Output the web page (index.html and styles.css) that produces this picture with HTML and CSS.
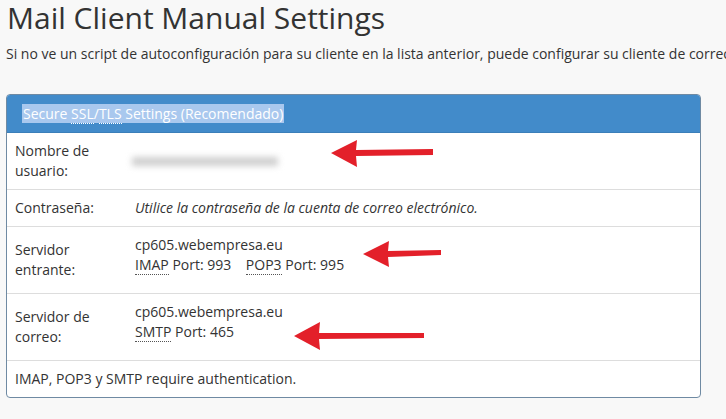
FILE: index.html
```html
<!DOCTYPE html>
<html lang="es">
<head>
    <meta charset="UTF-8">
    <title>Mail Client Manual Settings</title>
    <link rel="stylesheet" href="styles.css">
</head>
<body>
    <div class="page">
        <h1 class="page-title">Mail Client Manual Settings</h1>
        <p class="page-intro">Si no ve un script de autoconfiguración para su cliente en la lista anterior, puede configurar su cliente de correo electrónico manualmente con los siguientes ajustes:</p>

        <div class="panel">
            <div class="panel-heading"><span class="selected">Secure <abbr title="Secure Sockets Layer">SSL</abbr>/<abbr title="Transport Layer Security">TLS</abbr> Settings (Recomendado)</span></div>
            <div class="panel-row">
                <div class="row-label">Nombre de usuario:</div>
                <div class="row-value row-value-center"><span class="blurred"></span></div>
            </div>
            <div class="panel-row">
                <div class="row-label">Contraseña:</div>
                <div class="row-value"><em>Utilice la contraseña de la cuenta de correo electrónico.</em></div>
            </div>
            <div class="panel-row">
                <div class="row-label">Servidor entrante:</div>
                <div class="row-value row-value-server">
                    cp605.webempresa.eu<br>
                    <abbr title="Internet Message Access Protocol">IMAP</abbr> Port: 993 &nbsp;&nbsp;
                    <abbr title="Post Office Protocol 3">POP3</abbr> Port: 995
                </div>
            </div>
            <div class="panel-row">
                <div class="row-label">Servidor de correo:</div>
                <div class="row-value row-value-server">
                    cp605.webempresa.eu<br>
                    <abbr title="Simple Mail Transfer Protocol">SMTP</abbr> Port: 465
                </div>
            </div>
            <div class="panel-footer">IMAP, POP3 y SMTP require authentication.</div>
        </div>

        <!-- red pointers drawn over the screenshot -->
        <svg class="arrow arrow-user" width="110" height="30" viewBox="0 0 110 30">
            <path d="M3 15 L29 2 L28 12 L105 11 L105 17 L28 18 L29 29 Z" fill="#e3202a"/>
        </svg>
        <svg class="arrow arrow-in" width="84" height="30" viewBox="0 0 84 30">
            <path d="M2 15 L28 2 L27 12 L80 11 L80 16 L27 18 L28 28 Z" fill="#e3202a"/>
        </svg>
        <svg class="arrow arrow-out" width="136" height="30" viewBox="0 0 136 30">
            <path d="M2 15 L28 1 L27 12 L132 12 L132 17 L27 18 L28 29 Z" fill="#e3202a"/>
        </svg>
    </div>
</body>
</html>
```

FILE: styles.css
```css
body {
    margin: 0;
    background: #f8f8f8;
    font-family: 'Open Sans', Arial, sans-serif;
    color: #333;
    font-size: 14px;
    line-height: 20px;
    overflow: hidden;
}
.page {
    position: relative;
    padding: 0 25px 0 6px;
}
.page-title {
    margin: 0 0 0 1px;
    font-size: 30px;
    line-height: 36px;
    font-weight: 400;
    color: #333;
}
.page-intro {
    margin: 8px -40px 30px 0;
    white-space: nowrap;
    overflow: hidden;
}
.panel {
    background: #fff;
    border: 1px solid #6f8aa3;
    border-radius: 4px;
    overflow: hidden;
}
.panel-heading {
    background: #428bca;
    color: #fff;
    padding: 9px 15px 8px 15px;
    border-bottom: 1px solid #3b7fb9;
}
.selected {
    background: #a9c8ee;
    padding: 0 1px;
}
abbr {
    text-decoration: none;
    border-bottom: 1px dotted #555;
}
.selected abbr {
    border-bottom-color: #fff;
}
.panel-row {
    display: flex;
    padding: 8px 8px;
    border-bottom: 1px solid #ddd;
}
.row-label {
    width: 100px;
    padding-right: 20px;
    align-self: center;
}
.row-value {
    flex: 1;
}
.row-value-center {
    align-self: center;
}
.row-value-server {
    padding-bottom: 10px;
}
.blurred {
    display: block;
    margin-left: -3px;
    width: 146px;
    height: 9px;
    background: #cfcfcf;
    filter: blur(3px);
}
.panel-footer {
    padding: 8px 8px;
}
.arrow {
    position: absolute;
}
.arrow-user { left: 328px; top: 138px; }
.arrow-in { left: 361px; top: 239px; }
.arrow-out { left: 292px; top: 321px; }
```
